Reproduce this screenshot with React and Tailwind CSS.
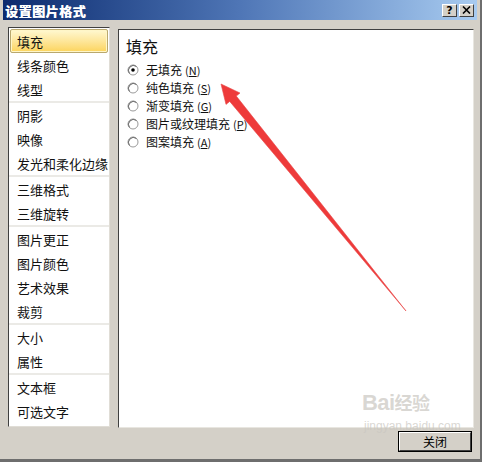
import React from "react";

const groups = [
  ["填充", "线条颜色", "线型"],
  ["阴影", "映像", "发光和柔化边缘"],
  ["三维格式", "三维旋转"],
  ["图片更正", "图片颜色", "艺术效果", "裁剪"],
  ["大小", "属性"],
  ["文本框", "可选文字"],
];

const options = [
  ["无填充", "N"],
  ["纯色填充", "S"],
  ["渐变填充", "G"],
  ["图片或纹理填充", "P"],
  ["图案填充", "A"],
];

function Radio({ checked }) {
  return (
    <svg width="12" height="12" viewBox="0 0 12 12" className="shrink-0">
      <circle cx="6" cy="6" r="5" fill="#ffffff" stroke="#9a9a9a" strokeWidth="1" />
      <path d="M2.5 9.5 A5 5 0 0 1 9.5 2.5" fill="none" stroke="#6a6a6a" strokeWidth="1" />
      {checked && <circle cx="6" cy="6" r="1.8" fill="#000" />}
    </svg>
  );
}

export default function App() {
  const font = { fontFamily: '"Noto Sans CJK SC", "Noto Sans", sans-serif' };
  const tip = [221, 84];
  const tail = [406, 311];
  const dx = tail[0] - tip[0];
  const dy = tail[1] - tip[1];
  const len = Math.hypot(dx, dy);
  const ux = dx / len, uy = dy / len;
  const px = uy, py = -ux;
  const hl = 19, hw = 9, sw = 4.2;
  const bx = tip[0] + ux * hl, by = tip[1] + uy * hl;
  const pts = [
    tip,
    [bx + px * hw, by + py * hw],
    [bx + px * sw, by + py * sw],
    tail,
    [bx - px * sw, by - py * sw],
    [bx - px * hw, by - py * hw],
  ]
    .map((p) => p.map((v) => v.toFixed(1)).join(","))
    .join(" ");

  return (
    <div
      className="relative w-[482px] h-[462px] bg-[#d4d0c8] flex flex-col px-[3px] border-r-[2px] border-b-[3px] border-[#6e6e6e] overflow-hidden"
      style={font}
    >
      {/* title bar */}
      <div className="h-[20px] shrink-0 flex items-center justify-between pl-[2px] pr-[3px] bg-gradient-to-r from-[#0c2a6e] via-[#4f76b6] to-[#a8cbf0]">
        <span
          className="text-white text-[13px] font-bold leading-none tracking-[0.5px]"
          style={{ textShadow: "0.6px 0 0 #fff" }}
        >
          设置图片格式
        </span>
        <div className="flex gap-[2px]">
          <div className="w-[15px] h-[13px] bg-[#d4d0c8] border border-t-white border-l-white border-r-[#404040] border-b-[#404040] flex items-center justify-center text-[11px] font-bold leading-none text-black" style={{ fontFamily: '"DejaVu Sans", sans-serif' }}>?</div>
          <div className="w-[15px] h-[13px] bg-[#d4d0c8] border border-t-white border-l-white border-r-[#404040] border-b-[#404040] flex items-center justify-center">
            <svg width="9" height="8" viewBox="0 0 9 8">
              <path d="M1 0.5 L8 7.5 M8 0.5 L1 7.5" stroke="#000" strokeWidth="1.6" />
            </svg>
          </div>
        </div>
      </div>

      {/* content */}
      <div className="flex pl-[5px] pt-[7px] gap-[8px]">
        {/* left list */}
        <div className="w-[102px] h-[400px] bg-white border border-t-[#404040] border-l-[#404040] border-r-[#e0ddd6] border-b-[#e0ddd6] pt-[1px] px-[1px] flex flex-col">
          {groups.map((g, gi) => (
            <div key={gi} className="flex flex-col">
              {gi > 0 && <div className="h-[2px] bg-[#ebeae6] -mx-[1px]" />}
              {g.map((item) => {
                const sel = item === "填充";
                return (
                  <div
                    key={item}
                    className={
                      "h-[24px] flex items-center text-[13px] text-[#111] leading-none " +
                      (sel
                        ? "pl-[6px] bg-gradient-to-b from-[#fff8d0] to-[#fcd45a] border border-[#b9a86e] rounded-[2px] shadow-[inset_0_0_0_1px_#fff6c8]"
                        : "pl-[7px]")
                    }
                  >
                    {item}
                  </div>
                );
              })}
            </div>
          ))}
        </div>

        {/* right panel */}
        <div className="w-[356px] h-[399px] mt-[2px] bg-white border border-t-[#404040] border-l-[#404040] border-r-[#e8e6e0] border-b-[#e8e6e0] pl-[7px] pt-[8px]">
          <div className="text-[16px] leading-none text-[#111] mb-[7px]">填充</div>
          <div className="flex flex-col">
            {options.map(([label, key], i) => (
              <div key={key} className="h-[18px] flex items-center gap-[7px] pl-[1px]">
                <Radio checked={i === 0} />
                <span className="text-[12px] leading-none text-[#111]">
                  {label}
                  <span className="ml-[3px] text-[11px]">(<u>{key}</u>)</span>
                </span>
              </div>
            ))}
          </div>
        </div>
      </div>

      {/* bottom button row */}
      <div className="flex justify-end pr-[5px] pt-[3px]">
        <div className="w-[74px] h-[21px] border border-black bg-[#d4d0c8] flex">
          <div className="flex-1 border border-t-white border-l-white border-r-[#404040] border-b-[#404040] flex items-center justify-center text-[12px] leading-none text-black">
            关闭
          </div>
        </div>
      </div>

      {/* watermark */}
      <div
        className="absolute left-[362px] top-[392px] pointer-events-none select-none text-[#c9c6c0]/70 flex flex-col leading-none"
        style={{ fontFamily: '"Liberation Sans", sans-serif' }}
      >
        <span className="text-[22px] font-bold tracking-tight">
          Bai<span className="text-[18px]" style={font}>经验</span>
        </span>
        <span className="text-[12px] mt-[6px] ml-[2px]">jingyan.baidu.com</span>
      </div>

      {/* red arrow */}
      <svg className="absolute left-0 top-0 pointer-events-none" width="482" height="462">
        <polygon points={pts} fill="#ee3a3a" stroke="#e84a4a" strokeWidth="0.6" strokeLinejoin="round" />
      </svg>
    </div>
  );
}
